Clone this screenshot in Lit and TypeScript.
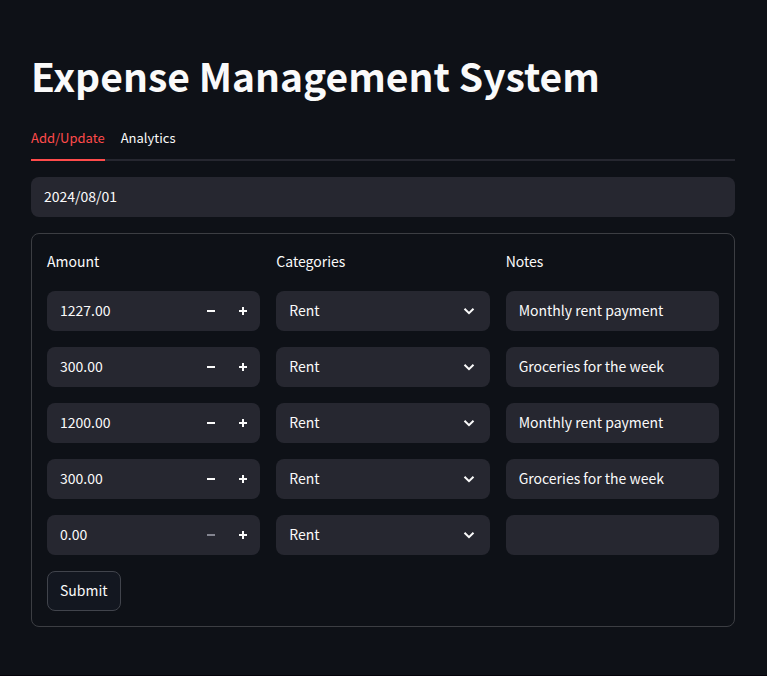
import { LitElement, html, css, svg } from "lit";
import { customElement, state } from "lit/decorators.js";

interface Expense {
  amount: number;
  category: string;
  notes: string;
}

const CATEGORIES = ["Rent", "Food", "Shopping", "Entertainment", "Other"];

const minusIcon = svg`<path d="M0 3h8v2H0z" />`;
const plusIcon = svg`<path d="M3 0h2v3h3v2H5v3H3V5H0V3h3z" />`;

@customElement("app-root")
export class AppRoot extends LitElement {
  @state() private tab = "Add/Update";
  @state() private expenses: Expense[] = [
    { amount: 1227, category: "Rent", notes: "Monthly rent payment" },
    { amount: 300, category: "Rent", notes: "Groceries for the week" },
    { amount: 1200, category: "Rent", notes: "Monthly rent payment" },
    { amount: 300, category: "Rent", notes: "Groceries for the week" },
    { amount: 0, category: "Rent", notes: "" },
  ];

  static styles = css`
    :host {
      display: block;
      box-sizing: border-box;
      min-height: 100vh;
      padding: 48px 32px 48px 31px;
      background: #0e1117;
      border-bottom: 2px solid #05030a;
      color: #fafafa;
      font-family: "Noto Sans CJK SC", "Noto Sans", sans-serif;
      font-size: 14px;
      line-height: 24px;
    }
    * {
      box-sizing: border-box;
    }
    input,
    select,
    button {
      font: inherit;
      color: inherit;
      margin: 0;
      border: 0;
      outline: 0;
      background: none;
    }
    h1 {
      margin: 0;
      font-size: 39px;
      font-weight: 700;
      line-height: 54px;
    }
    .tabs {
      display: flex;
      gap: 16px;
      height: 41px;
      margin-top: 18px;
      border-bottom: 2px solid #262730;
    }
    .tab {
      height: 41px;
      padding: 0 0 4px;
      font-size: 13px;
      border-bottom: 2px solid transparent;
      cursor: pointer;
    }
    .tab.active {
      color: #ff4b4b;
      border-color: #ff4b4b;
    }
    .field {
      display: flex;
      position: relative;
      align-items: center;
      height: 40px;
      min-width: 0;
      border-radius: 8px;
      background: #262730;
    }
    .field input,
    .field select {
      flex: 1;
      min-width: 0;
      height: 40px;
      padding: 0 13px 2px;
      appearance: none;
    }
    .field option {
      background: #262730;
    }
    input[type="number"] {
      appearance: textfield;
    }
    input::-webkit-inner-spin-button {
      appearance: none;
      margin: 0;
    }
    .date {
      margin: 16px 0;
    }
    form {
      padding: 15px;
      border: 1px solid #3c3e43;
      border-radius: 8px;
    }
    .grid {
      display: grid;
      grid-template-columns: repeat(3, minmax(0, 1fr));
      gap: 16px;
    }
    .head {
      height: 26px;
    }
    .step {
      display: grid;
      place-items: center;
      width: 32px;
      height: 40px;
      padding: 0;
      cursor: pointer;
    }
    .step:last-child {
      margin-right: 1px;
    }
    .step:disabled {
      color: #83848f;
      cursor: default;
    }
    svg {
      display: block;
      fill: currentColor;
    }
    .chevron {
      position: absolute;
      right: 15px;
      pointer-events: none;
      fill: none;
      stroke: currentColor;
      stroke-width: 2;
    }
    .submit {
      height: 40px;
      margin-top: 16px;
      padding: 0 12px 2px;
      border: 1px solid #41444c;
      border-radius: 8px;
      background: #131720;
      cursor: pointer;
    }
  `;

  private change(index: number, patch: Partial<Expense>) {
    this.expenses = this.expenses.map((e, i) => (i === index ? { ...e, ...patch } : e));
  }

  private row(e: Expense, i: number) {
    return html`
      <div class="field">
        <input type="number" min="0" step="0.01" aria-labelledby="amount" .value=${e.amount.toFixed(2)}
          @change=${(ev: Event) => this.change(i, { amount: Number((ev.target as HTMLInputElement).value) })} />
        <button class="step" type="button" aria-label="Decrease amount" ?disabled=${e.amount <= 0}
          @click=${() => this.change(i, { amount: Math.max(0, e.amount - 1) })}>
          <svg width="8" height="8" viewBox="0 0 8 8">${minusIcon}</svg>
        </button>
        <button class="step" type="button" aria-label="Increase amount"
          @click=${() => this.change(i, { amount: e.amount + 1 })}>
          <svg width="8" height="8" viewBox="0 0 8 8">${plusIcon}</svg>
        </button>
      </div>
      <div class="field">
        <select aria-labelledby="category"
          @change=${(ev: Event) => this.change(i, { category: (ev.target as HTMLSelectElement).value })}>
          ${CATEGORIES.map((c) => html`<option ?selected=${c === e.category}>${c}</option>`)}
        </select>
        <svg class="chevron" width="12" height="8" viewBox="0 0 12 8"><path d="M1.5 1.7L6 6.2l4.500-4.500" /></svg>
      </div>
      <div class="field">
        <input type="text" aria-labelledby="notes" .value=${e.notes}
          @change=${(ev: Event) => this.change(i, { notes: (ev.target as HTMLInputElement).value })} />
      </div>
    `;
  }

  render() {
    return html`
      <main>
        <h1>Expense Management System</h1>
        <div class="tabs" role="tablist">
          ${["Add/Update", "Analytics"].map(
            (t) => html`<button class="tab ${t === this.tab ? "active" : ""}" role="tab"
              aria-selected=${t === this.tab} @click=${() => (this.tab = t)}>${t}</button>`
          )}
        </div>
        <div class="field date">
          <input type="text" aria-label="Date" value="2024/08/01" />
        </div>
        <form @submit=${(ev: Event) => ev.preventDefault()}>
          <div class="grid">
            <div class="head" id="amount">Amount</div>
            <div class="head" id="category">Categories</div>
            <div class="head" id="notes">Notes</div>
            ${this.expenses.map((e, i) => this.row(e, i))}
          </div>
          <button class="submit" type="submit">Submit</button>
        </form>
      </main>
    `;
  }
}
